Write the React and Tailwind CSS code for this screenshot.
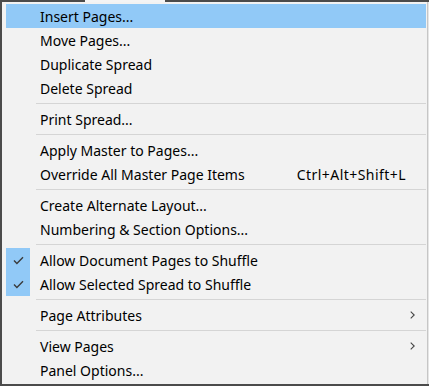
import React from 'react';

const items = [
    { label: 'Insert Pages...', active: true },
    { label: 'Move Pages...' },
    { label: 'Duplicate Spread' },
    { label: 'Delete Spread' },
    'sep',
    { label: 'Print Spread...' },
    'sep',
    { label: 'Apply Master to Pages...' },
    { label: 'Override All Master Page Items', shortcut: 'Ctrl+Alt+Shift+L' },
    'sep',
    { label: 'Create Alternate Layout...' },
    { label: 'Numbering & Section Options...' },
    'sep',
    { label: 'Allow Document Pages to Shuffle', checked: true },
    { label: 'Allow Selected Spread to Shuffle', checked: true },
    'sep',
    { label: 'Page Attributes', submenu: true },
    'sep',
    { label: 'View Pages', submenu: true },
    { label: 'Panel Options...' },
];

const Check = () => (
    <svg width="11" height="9" viewBox="0 0 11 9" fill="none">
        <path d="M1 4.6 L3.9 7.5 L10 1.3" stroke="#3a3a3a" strokeWidth="1.4" />
    </svg>
);

const Chevron = () => (
    <svg width="5" height="8" viewBox="0 0 5 8" fill="none">
        <path d="M0.7 0.6 L4.2 4 L0.7 7.4" stroke="#444" strokeWidth="1.1" />
    </svg>
);

const Row = ({ item }) => (
    <div className={`flex h-6 items-center ${item.active ? 'bg-[#91c9f7]' : ''}`}>
        {/* check column */}
        <div className={`flex h-6 w-6 shrink-0 items-center justify-center ${item.checked ? 'bg-[#91c9f7]' : ''}`}>
            {item.checked && <Check />}
        </div>
        <span className="ml-[10px] flex-1 whitespace-nowrap">{item.label}</span>
        {item.shortcut && <span className="mr-[20px] whitespace-nowrap tracking-[0.45px]">{item.shortcut}</span>}
        {item.submenu && (
            <span className="mr-[11px] flex items-center">
                <Chevron />
            </span>
        )}
    </div>
);

export default function App() {
    return (
        <div className="relative h-[386px] w-[429px] overflow-hidden bg-[#4b4b4b]">
            {/* light strip peeking above the menu */}
            <div className="absolute left-[85px] top-0 h-[2px] w-[80px] bg-[#f4f4f4]" />

            <div className="ml-[2px] mt-[2px] flex h-[382px] w-[427px]">
                <div
                    className="h-full w-[426px] border-r border-[#c6c6c6] bg-[#f2f2f2] pl-1 pr-[1px] pt-[2px] text-[14px] text-black"
                    style={{ fontFamily: '"Noto Sans", "Open Sans", sans-serif' }}
                >
                    {items.map((item, i) =>
                        item === 'sep' ? (
                            <div key={i} className="flex h-[7px] items-center pl-[30px]">
                                <div className="h-px w-full bg-[#d5d5d5]" />
                            </div>
                        ) : (
                            <Row key={i} item={item} />
                        )
                    )}
                </div>
                <div className="h-full w-px bg-[#e6e6e6]" />
            </div>
        </div>
    );
}
